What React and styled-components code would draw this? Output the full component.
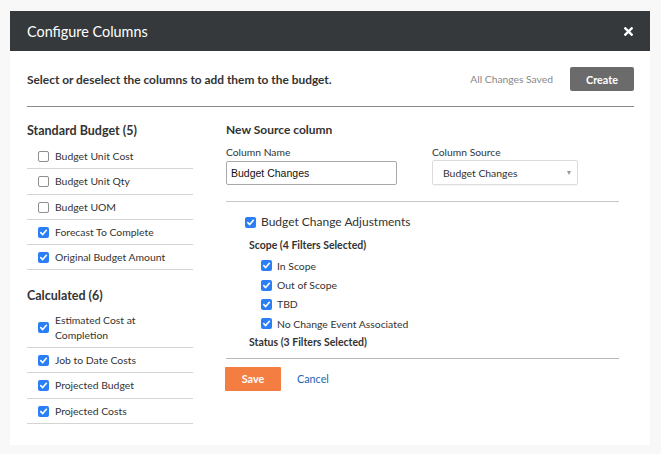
import React from 'react'
import styled, { createGlobalStyle } from 'styled-components'

const GlobalStyle = createGlobalStyle`
  html, body {
    margin: 0;
    padding: 0;
    background: #f8f8f8;
    font-family: Lato, "Open Sans", sans-serif;
    color: #333;
  }
`

const standard = [
  { label: 'Budget Unit Cost', checked: false },
  { label: 'Budget Unit Qty', checked: false },
  { label: 'Budget UOM', checked: false },
  { label: 'Forecast To Complete', checked: true },
  { label: 'Original Budget Amount', checked: true },
]

const calculated = [
  { label: 'Estimated Cost at Completion', checked: true },
  { label: 'Job to Date Costs', checked: true },
  { label: 'Projected Budget', checked: true },
  { label: 'Projected Costs', checked: true },
]

const scopeFilters = ['In Scope', 'Out of Scope', 'TBD', 'No Change Event Associated']

const Check = ({ checked }) => (
  <Box checked={checked}>
    {checked && (
      <svg width="9" height="9" viewBox="0 0 10 10">
        <path d="M2 5.2 L4.1 7.3 L8.2 2.6" fill="none" stroke="#fff" strokeWidth="1.8" strokeLinecap="round" strokeLinejoin="round" />
      </svg>
    )}
  </Box>
)

const App = () => {
  return (
    <>
      <GlobalStyle />
      <Modal>
        <Header>
          <Title>Configure Columns</Title>
          <svg width="9" height="9" viewBox="0 0 10 10">
            <path d="M1.5 1.5 L8.5 8.5 M8.5 1.5 L1.5 8.5" stroke="#fff" strokeWidth="2.6" strokeLinecap="square" />
          </svg>
        </Header>
        <Body>
          <TopRow>
            <Intro>Select or deselect the columns to add them to the budget.</Intro>
            <Actions>
              <Saved>All Changes Saved</Saved>
              <CreateButton>Create</CreateButton>
            </Actions>
          </TopRow>
          <Columns>
            <Sidebar>
              <Group>Standard Budget (5)</Group>
              <List>
                {standard.map((item) => (
                  <Row key={item.label}>
                    <Check checked={item.checked} />
                    <RowText>{item.label}</RowText>
                  </Row>
                ))}
              </List>
              <Group spaced>Calculated (6)</Group>
              <List>
                {calculated.map((item) => (
                  <Row key={item.label}>
                    <Check checked={item.checked} />
                    <RowText>{item.label}</RowText>
                  </Row>
                ))}
              </List>
            </Sidebar>
            <Editor>
              <Group small>New Source column</Group>
              <Fields>
                <Field>
                  <Label>Column Name</Label>
                  <TextInput defaultValue="Budget Changes" />
                </Field>
                <Field>
                  <Label>Column Source</Label>
                  <Select>
                    <span>Budget Changes</span>
                    <Caret />
                  </Select>
                </Field>
              </Fields>
              <Filters>
                <MainOption>
                  <Check checked />
                  <span>Budget Change Adjustments</span>
                </MainOption>
                <FilterTitle>Scope (4 Filters Selected)</FilterTitle>
                {scopeFilters.map((f) => (
                  <Filter key={f}>
                    <Check checked />
                    <span>{f}</span>
                  </Filter>
                ))}
                <FilterTitle last>Status (3 Filters Selected)</FilterTitle>
              </Filters>
              <Buttons>
                <SaveButton>Save</SaveButton>
                <CancelLink>Cancel</CancelLink>
              </Buttons>
            </Editor>
          </Columns>
        </Body>
      </Modal>
    </>
  )
}; export default App

const Modal = styled.div`
  margin: 11px 11px 0 10px;
  width: 640px;
  height: 434px;
  background: #fff;
  box-sizing: border-box;
`

const Header = styled.div`
  height: 40px;
  background: #35393c;
  display: flex;
  align-items: center;
  justify-content: space-between;
  padding: 0 17px 0 17px;
`

const Title = styled.div`
  color: #fff;
  font-size: 14.4px;
`

const Body = styled.div`
  padding: 16px 16px 0 17px;
`

const TopRow = styled.div`
  display: flex;
  align-items: center;
  justify-content: space-between;
  height: 24px;
  padding-bottom: 15px;
  border-bottom: 1px solid #8a8a8a;
`

const Intro = styled.div`
  font-size: 11.9px;
  font-weight: 700;
  color: #333;
`

const Actions = styled.div`
  display: flex;
  align-items: center;
  gap: 17px;
`

const Saved = styled.div`
  font-size: 10.3px;
  color: #888;
`

const CreateButton = styled.button`
  width: 64px;
  height: 24px;
  border: none;
  border-radius: 2px;
  background: #6b6b6b;
  color: #fff;
  font-family: Lato, sans-serif;
  font-weight: 700;
  font-size: 10.8px;
  padding: 0;
`

const Columns = styled.div`
  display: flex;
  gap: 33px;
`

const Sidebar = styled.div`
  width: 166px;
  padding-top: 16px;
`

const Group = styled.div`
  font-size: ${({ small }) => (small ? '12px' : '12.5px')};
  font-weight: 700;
  color: #333;
  line-height: 16px;
  margin-top: ${({ spaced }) => (spaced ? '18px' : '0')};
  margin-bottom: ${({ small, spaced }) => (small ? '7px' : spaced ? '3.5px' : '5px')};
`

const List = styled.div`
  display: flex;
  flex-direction: column;
`

const Row = styled.div`
  display: flex;
  align-items: center;
  gap: 6px;
  padding: 5px 0 4.25px 11px;
  border-bottom: 1px solid #d4d4d4;
`

const RowText = styled.span`
  max-width: 122px;
  font-size: 10.4px;
  line-height: 15px;
  color: #333;
`

const Box = styled.span`
  flex: none;
  width: 11px;
  height: 11px;
  box-sizing: border-box;
  border-radius: 2px;
  display: inline-flex;
  align-items: center;
  justify-content: center;
  background: ${({ checked }) => (checked ? '#2a7ff6' : '#fff')};
  border: ${({ checked }) => (checked ? 'none' : '1px solid #8e8e8e')};
`

const Editor = styled.div`
  flex: 1;
  padding-top: 15px;
  padding-right: 15px;
`

const Fields = styled.div`
  display: flex;
  gap: 35px;
  padding-bottom: 16px;
  border-bottom: 1px solid #c8c8c8;
`

const Field = styled.div`
  display: flex;
  flex-direction: column;
`

const Label = styled.div`
  font-size: 10.3px;
  color: #333;
  line-height: 14px;
  margin-bottom: 2px;
`

const TextInput = styled.input`
  width: 171px;
  height: 24px;
  box-sizing: border-box;
  border: 1px solid #a9a9a9;
  border-radius: 2px;
  padding: 0 4px;
  font-family: "Liberation Sans", Arial, sans-serif;
  font-size: 10.5px;
  color: #111;
  outline: none;
`

const Select = styled.div`
  width: 146px;
  height: 25px;
  margin-top: -1px;
  box-sizing: border-box;
  border: 1px solid #dcdcdc;
  border-radius: 2px;
  display: flex;
  align-items: center;
  justify-content: space-between;
  padding: 0 5px 0 10px;
  font-size: 10.4px;
  color: #333;
  box-shadow: 0 1px 1px rgba(0, 0, 0, 0.04);
`

const Caret = styled.span`
  width: 0;
  height: 0;
  border-left: 2.5px solid transparent;
  border-right: 2.5px solid transparent;
  border-top: 4px solid #999;
  margin-right: 1px;
`

const Filters = styled.div`
  padding: 12px 0 9px 19px;
  border-bottom: 1px solid #b8b8b8;
  display: flex;
  flex-direction: column;
`

const MainOption = styled.div`
  display: flex;
  align-items: center;
  gap: 5px;
  font-size: 12px;
  color: #333;
  line-height: 16px;
`

const FilterTitle = styled.div`
  font-size: 10.5px;
  font-weight: 700;
  color: #333;
  line-height: 14px;
  margin: ${({ last }) => (last ? '1px 0 0 4px' : '8px 0 4px 4px')};
`

const Filter = styled.div`
  display: flex;
  align-items: center;
  gap: 5px;
  padding-left: 16px;
  height: 19.4px;
  font-size: 10.4px;
  color: #333;
`

const Buttons = styled.div`
  display: flex;
  align-items: center;
  gap: 16px;
  padding-top: 8px;
  margin-left: -1px;
`

const SaveButton = styled.button`
  width: 56px;
  height: 24px;
  border: none;
  border-radius: 1px;
  background: #f47e42;
  color: #fff;
  font-family: Lato, sans-serif;
  font-weight: 700;
  font-size: 10.8px;
  padding: 0;
`

const CancelLink = styled.a`
  font-size: 10.8px;
  color: #2166b0;
  cursor: pointer;
`
